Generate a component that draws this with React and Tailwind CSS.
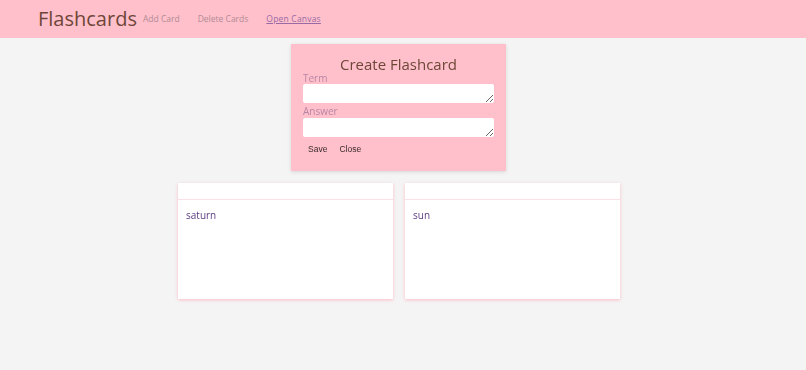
import React from "react";

const cards = [{ term: "saturn" }, { term: "sun" }];

function Nav() {
  return (
    <header className="h-[38px] bg-[#ffc0cb] flex items-center pl-[38px]">
      <h1 className="text-[20px] leading-none text-[#6e4638] font-normal shrink-0">Flashcards</h1>
      <nav className="flex items-center ml-[6px] text-[8.5px] text-[#b08c94] pt-[1px] whitespace-nowrap shrink-0">
        <a>Add Card</a>
        <a className="ml-[18px]">Delete Cards</a>
        <a className="ml-[18px] text-[#9a6aa4] underline tracking-[0.2px]">Open Canvas</a>
      </nav>
    </header>
  );
}

function CreateForm() {
  return (
    <div className="w-[215px] bg-[#ffc0cb] shadow-[0_1px_4px_rgba(0,0,0,0.12)] px-[12px] pt-[11px] pb-[17px]">
      <h2 className="text-center text-[15px] leading-[18px] text-[#6e4638]">Create Flashcard</h2>
      <label className="block text-[10px] leading-[11px] text-[#b886a6]">Term</label>
      <textarea className="block w-[191px] h-[19px] bg-white rounded-[2px] resize-y" />
      <label className="block text-[10px] leading-[11px] text-[#b886a6] mt-[3px]">Answer</label>
      <textarea className="block w-[191px] h-[19px] bg-white rounded-[2px] resize-y mt-[1px]" />
      <div className="flex gap-[12px] mt-[7px] pl-[5px] text-[8.5px] leading-[10px] text-[#3a2a2a] font-['Liberation_Sans',sans-serif]">
        <button>Save</button>
        <button>Close</button>
      </div>
    </div>
  );
}

function Card({ term }) {
  return (
    <div className="w-[215px] h-[116px] bg-white shadow-[0_1px_3px_rgba(255,182,193,0.9)]">
      <div className="h-[17px] border-b border-[#fbe0e6]" />
      <div className="px-[8px] pt-[8px] text-[10px] text-[#5e3c82]">{term}</div>
    </div>
  );
}

export default function App() {
  return (
    <div className="min-h-[370px] bg-[#f4f4f4] font-['Open_Sans',sans-serif]">
      <Nav />
      <main className="flex flex-col items-center pr-[8px]">
        <div className="mt-[6px] mr-[1px]">
          <CreateForm />
        </div>
        <div className="flex gap-[12px] mt-[12px]">
          {cards.map((c) => (
            <Card key={c.term} term={c.term} />
          ))}
        </div>
      </main>
    </div>
  );
}
